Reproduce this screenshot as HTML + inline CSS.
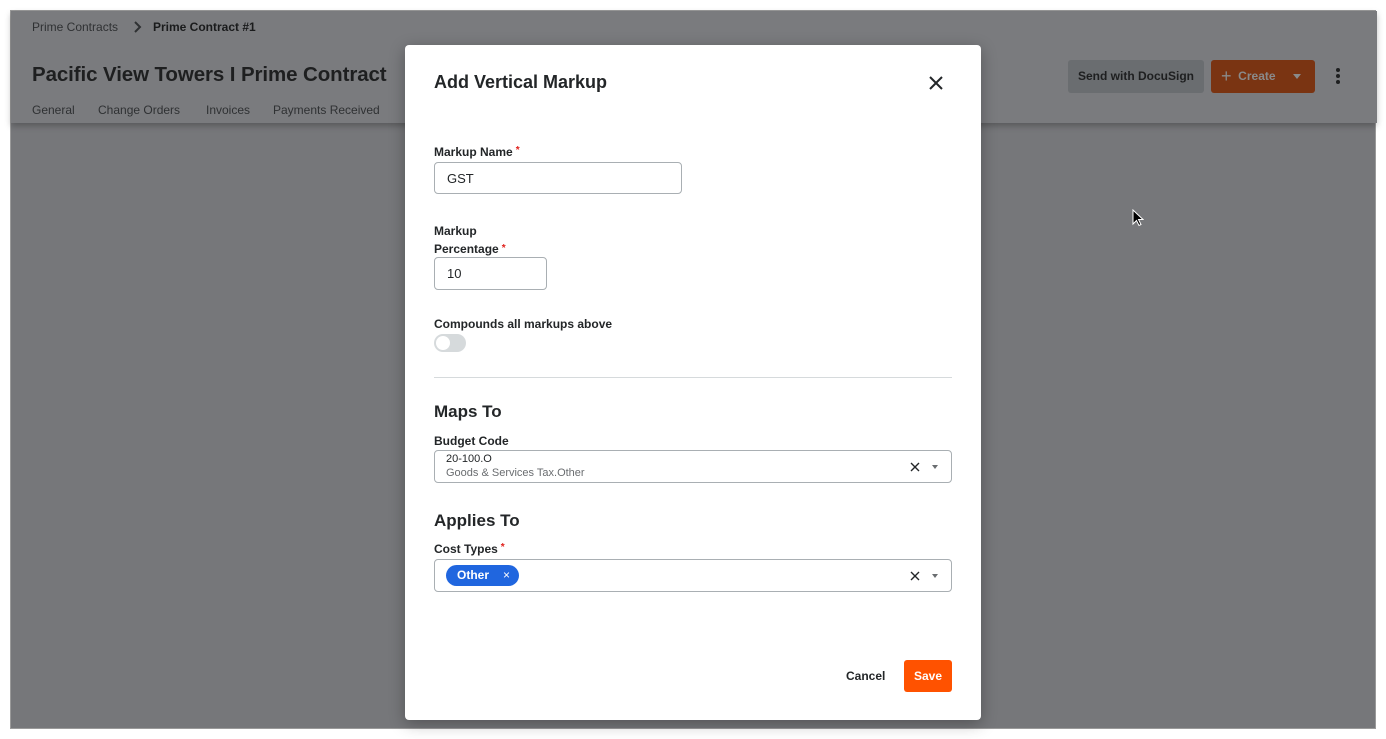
<!DOCTYPE html>
<html><head><meta charset="utf-8"><style>
*{box-sizing:border-box;margin:0;padding:0}
body{width:1386px;height:739px;background:#fff;font-family:"Liberation Sans",sans-serif;position:relative;overflow:hidden;color:#232628}
.bg{position:absolute;left:10px;top:10px;width:1366px;height:719px;background:#76777a;border:1px solid #9a9a9a}
.hdr{position:absolute;left:0;top:0;width:1366px;height:112px;background:#7a7b7e;box-shadow:0 3px 6px rgba(0,0,0,.25)}
.a{position:absolute;white-space:nowrap}
.modal{position:absolute;left:405px;top:45px;width:576px;height:675px;background:#fff;border-radius:4px;box-shadow:0 4px 16px rgba(0,0,0,.3)}
.lbl{position:absolute;font-size:12px;font-weight:bold;color:#232628}
.req{color:#e0201b;font-size:10px;vertical-align:top;margin-left:3px}
.inp{position:absolute;border:1px solid #a9afb3;border-radius:4px;background:#fff;font-size:13px}
</style></head><body>
<div class="bg">
 <div class="hdr">
  <div class="a" style="left:21px;top:9px;font-size:12px;color:#2f3133">Prime Contracts</div>
  <svg class="a" style="left:122px;top:10px" width="10" height="12"><path d="M2 1l5 5-5 5" stroke="#2f3133" stroke-width="2" fill="none"/></svg>
  <div class="a" style="left:142px;top:9px;font-size:12px;font-weight:bold;color:#1a1b1c">Prime Contract #1</div>
  <div class="a" style="left:21px;top:52px;font-size:20.5px;font-weight:bold;color:#1e1f20;letter-spacing:-0.1px">Pacific View Towers I Prime Contract</div>
  <div class="a" style="left:21px;top:92px;font-size:12px;color:#2f3133">General</div>
  <div class="a" style="left:87px;top:92px;font-size:12px;color:#2f3133">Change Orders</div>
  <div class="a" style="left:195px;top:92px;font-size:12px;color:#2f3133">Invoices</div>
  <div class="a" style="left:262px;top:92px;font-size:12px;color:#2f3133">Payments Received</div>
  <div class="a" style="left:1057px;top:49px;width:136px;height:33px;background:#6a6d70;border-radius:3px;font-size:12px;font-weight:bold;color:#1e1f20;text-align:center;line-height:33px">Send with DocuSign</div>
  <div class="a" style="left:1200px;top:49px;width:104px;height:33px;background:#7a3412;border-radius:3px;font-size:12px;font-weight:bold;color:#8a8a8a;line-height:33px;padding-left:10px">
   <span style="font-size:18px;font-weight:normal;vertical-align:-2px">+</span>&nbsp;&nbsp;Create<span style="position:absolute;left:82px;top:14px;border:4px solid transparent;border-top:5px solid #8a8a8a"></span></div>
  <div class="a" style="left:1325px;top:57px;width:4px">
   <div style="width:4px;height:4px;border-radius:2px;background:#1e1f20;margin-bottom:2px"></div>
   <div style="width:4px;height:4px;border-radius:2px;background:#1e1f20;margin-bottom:2px"></div>
   <div style="width:4px;height:4px;border-radius:2px;background:#1e1f20"></div>
  </div>
 </div>
 <svg class="a" style="left:1121px;top:198px" width="12" height="18"><path d="M1 1v14l3.5-3.5 2.5 5 2-1-2.5-5H11z" fill="#000" stroke="#fff" stroke-width="1"/></svg>
</div>
<div class="modal">
 <div class="a" style="left:29px;top:27px;font-size:18px;font-weight:bold">Add Vertical Markup</div>
 <svg class="a" style="left:524px;top:31px" width="14" height="14"><path d="M1 1l12 12M13 1L1 13" stroke="#232628" stroke-width="2"/></svg>
 <div class="lbl" style="left:29px;top:100px">Markup Name<span class="req">*</span></div>
 <div class="inp" style="left:29px;top:117px;width:248px;height:32px;padding:8px 12px">GST</div>
 <div class="lbl" style="left:29px;top:177px;line-height:18px">Markup<br>Percentage<span class="req">*</span></div>
 <div class="inp" style="left:29px;top:212px;width:113px;height:33px;padding:8px 12px">10</div>
 <div class="lbl" style="left:29px;top:272px">Compounds all markups above</div>
 <div class="a" style="left:29px;top:289px;width:32px;height:18px;border-radius:9px;background:#d6dadc"><div style="position:absolute;left:2px;top:2px;width:14px;height:14px;border-radius:7px;background:#fff"></div></div>
 <div class="a" style="left:29px;top:332px;width:518px;height:1px;background:#d6dadc"></div>
 <div class="a" style="left:29px;top:357px;font-size:17px;font-weight:bold">Maps To</div>
 <div class="lbl" style="left:29px;top:389px">Budget Code</div>
 <div class="inp" style="left:29px;top:405px;width:518px;height:33px">
  <div class="a" style="left:11px;top:2px;font-size:11px;color:#232628">20-100.O</div>
  <div class="a" style="left:11px;top:16px;font-size:11px;color:#6a6d70">Goods &amp; Services Tax.Other</div>
  <svg class="a" style="left:475px;top:11px" width="10" height="10"><path d="M1 1l8 8M9 1L1 9" stroke="#232628" stroke-width="1.4"/></svg>
  <span class="a" style="left:497px;top:14px;border:3px solid transparent;border-top:4px solid #6a6d70"></span>
 </div>
 <div class="a" style="left:29px;top:466px;font-size:17px;font-weight:bold">Applies To</div>
 <div class="lbl" style="left:29px;top:497px">Cost Types<span class="req">*</span></div>
 <div class="inp" style="left:29px;top:514px;width:518px;height:33px">
  <div class="a" style="left:11px;top:5px;width:73px;height:21px;border-radius:11px;background:#2066df;color:#fff;font-size:12px;font-weight:bold;line-height:21px;padding-left:11px">Other<span style="position:absolute;left:57px;font-weight:normal">×</span></div>
  <svg class="a" style="left:475px;top:11px" width="10" height="10"><path d="M1 1l8 8M9 1L1 9" stroke="#232628" stroke-width="1.4"/></svg>
  <span class="a" style="left:497px;top:14px;border:3px solid transparent;border-top:4px solid #6a6d70"></span>
 </div>
 <div class="a" style="left:441px;top:624px;font-size:12px;font-weight:bold">Cancel</div>
 <div class="a" style="left:499px;top:615px;width:48px;height:32px;background:#ff5200;border-radius:3px;color:#fff;font-size:12px;font-weight:bold;text-align:center;line-height:32px">Save</div>
</div>
</body></html>
